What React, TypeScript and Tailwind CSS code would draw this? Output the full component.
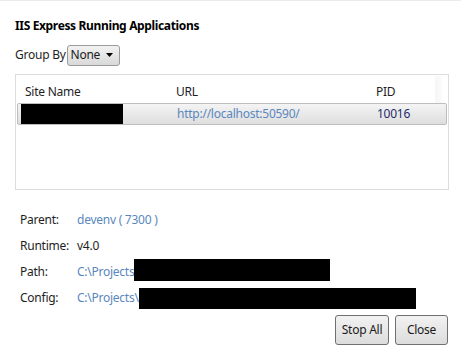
import React from "react";

const link = "text-[#5a87bd]";

function Row({ label, children }: { label: string; children: React.ReactNode }) {
  return (
    <div className="flex items-center h-[26px]">
      <div className="w-[57px] shrink-0">{label}</div>
      <div className="flex items-center">{children}</div>
    </div>
  );
}

export default function App() {
  return (
    <div
      className="w-[461px] h-[356px] bg-white text-[12px] tracking-[-0.25px] text-[#1e1e1e] overflow-hidden border-t border-[#ebebeb] flex flex-col"
      style={{ fontFamily: '"Noto Sans", "Open Sans", sans-serif' }}
    >
      <div className="pl-[15px] pt-[17px] h-[38px] font-bold text-[12px] tracking-[-0.35px] leading-[16px] text-black">
        IIS Express Running Applications
      </div>
      <div className="flex items-center pl-[15px] h-[24px] mt-[4px]">
        <span className="leading-none">Group By</span>
        <div className="ml-[1px] w-[53px] h-[21px] rounded-[3px] border border-[#9a9a9a] bg-gradient-to-b from-[#f2f2f2] to-[#d9d9d9] flex items-center justify-between pl-[3px] pr-[6px] text-[#1a1a1a]">
          <span className="leading-none">None</span>
          <svg width="7" height="4" viewBox="0 0 7 4">
            <path d="M0 0 L7 0 L3.5 4 Z" fill="#000" />
          </svg>
        </div>
      </div>
      <div className="ml-[15px] mt-[7px] w-[434px] h-[116px] border border-[#dcdcdc] relative">
        <div className="flex h-[28px] items-end pb-[2px] mr-[13px] relative">
          <div className="w-[160px] pl-[9px]">Site Name</div>
          <div className="w-[200px]">URL</div>
          <div>PID</div>
          <div className="absolute right-[-7px] top-[1px] bottom-0 w-[7px] bg-gradient-to-r from-[#f6f6f6] to-[#fbfbfb]" />
        </div>
        <div className="ml-[1px] mr-[1px] h-[22px] rounded-[2px] border border-[#bdbdbd] bg-gradient-to-b from-[#f4f4f4] to-[#dedede] flex items-center">
          <div className="ml-[3px] w-[102px] h-[20px] bg-black" />
          <div className={`ml-[54px] w-[200px] ${link}`}>http://localhost:50590/</div>
          <div className="text-[#1c2c6c]">10016</div>
        </div>
      </div>
      <div className="pl-[20px] mt-[17px] flex flex-col">
        <Row label="Parent:">
          <span className={link}>devenv ( 7300 )</span>
        </Row>
        <Row label="Runtime:">
          <span>v4.0</span>
        </Row>
        <Row label="Path:">
          <span className={link}>C:\Projects</span>
          <div className="w-[196px] h-[22px] bg-black mt-[-4px]" />
        </Row>
        <Row label="Config:">
          <span className={link}>C:\Projects\</span>
          <div className="w-[277px] h-[21px] bg-black mt-[1px]" />
        </Row>
      </div>
      <div className="flex justify-end gap-[6px] pr-[13px] mt-[4px]">
        <button className="w-[54px] h-[30px] rounded-[3px] border border-[#707070] bg-gradient-to-b from-[#f2f2f2] to-[#dcdcdc] text-[#1a1a1a] text-[12px]">
          Stop All
        </button>
        <button className="w-[53px] h-[30px] rounded-[3px] border border-[#707070] bg-gradient-to-b from-[#f2f2f2] to-[#dcdcdc] text-[#1a1a1a] text-[12px]">
          Close
        </button>
      </div>
    </div>
  );
}
